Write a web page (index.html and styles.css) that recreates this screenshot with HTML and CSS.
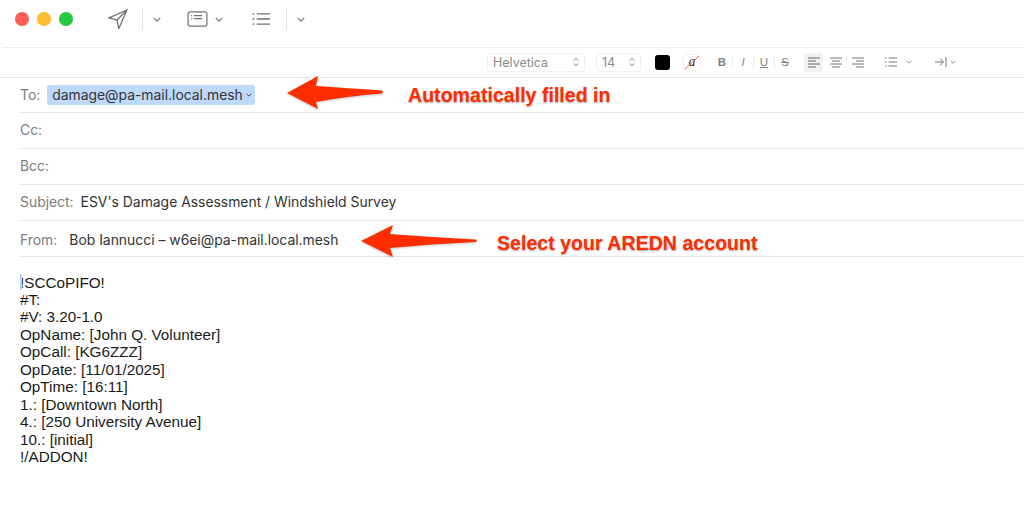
FILE: index.html
```html
<!DOCTYPE html>
<html lang="en">
<head>
<meta charset="utf-8">
<title>Compose message</title>
<link rel="stylesheet" href="styles.css">
</head>
<body>
<div class="window">
  <header class="toolbar">
    <div class="lights"><span class="light red"></span><span class="light yellow"></span><span class="light green"></span></div>
    <svg class="ico send" viewBox="0 0 20 20"><path d="M19 1 1 8.800l8 2.200 1.800 8.500z M19 1 9 11"/></svg>
    <span class="vsep first"></span>
    <svg class="chev c1" viewBox="0 0 10 6"><path d="M1 1l4 4 4-4"/></svg>
    <svg class="ico header-ico" viewBox="0 0 22 17"><rect x="1" y="1" width="20" height="15" rx="2"/><path d="M4 5h1M7 5h9M4 8h1M7 8h9"/></svg>
    <svg class="chev c2" viewBox="0 0 10 6"><path d="M1 1l4 4 4-4"/></svg>
    <svg class="ico list-ico" viewBox="0 0 19 14"><path d="M.5 1.500h2M5 1.500h14M.5 7h2M5 7h14M.5 12.500h2M5 12.500h14"/></svg>
    <span class="vsep second"></span>
    <svg class="chev c3" viewBox="0 0 10 6"><path d="M1 1l4 4 4-4"/></svg>
  </header>
  <div class="formatbar">
    <div class="select font-select"><span>Helvetica</span><svg class="updown" viewBox="0 0 6 10"><path d="M.8 3.500 3 1.200l2.200 2.300M.8 6.500 3 8.800l2.200-2.300"/></svg></div>
    <div class="select size-select"><span>14</span><svg class="updown" viewBox="0 0 6 10"><path d="M.8 3.500 3 1.200l2.200 2.300M.8 6.500 3 8.800l2.200-2.300"/></svg></div>
    <span class="swatch"></span>
    <span class="bgswatch"><i>a</i><svg class="slash" viewBox="0 0 16 15"><path d="M1 14 15 1"/></svg></span>
    <div class="styles">
      <b class="st">B</b><span class="thin"></span><i class="st">I</i><span class="thin"></span><u class="st">U</u><span class="thin"></span><s class="st">S</s>
    </div>
    <div class="aligns">
      <span class="al active"><svg viewBox="0 0 12 11"><path d="M0 1h12M0 4h8M0 7h12M0 10h8"/></svg></span>
      <span class="al"><svg viewBox="0 0 12 11"><path d="M0 1h12M2 4h8M0 7h12M2 10h8"/></svg></span>
      <span class="thin"></span>
      <span class="al"><svg viewBox="0 0 12 11"><path d="M0 1h12M4 4h8M0 7h12M4 10h8"/></svg></span>
    </div>
    <svg class="fmt-list" viewBox="0 0 12 10"><path d="M0 1h1.500M3.500 1H12M0 5h1.500M3.500 5H12M0 9h1.500M3.500 9H12"/></svg>
    <svg class="chev small list-chev" viewBox="0 0 10 6"><path d="M1 1l4 4 4-4"/></svg>
    <svg class="fmt-indent" viewBox="0 0 12 10"><path d="M0 5h8M5 1.500 8.500 5 5 8.500M11 0v10"/></svg>
    <svg class="chev small indent-chev" viewBox="0 0 10 6"><path d="M1 1l4 4 4-4"/></svg>
  </div>
  <section class="fields">
    <div class="row to"><span class="label">To:</span><span class="token">damage@pa-mail.local.mesh<svg class="chev tok" viewBox="0 0 10 6"><path d="M1 1l4 4 4-4"/></svg></span></div>
    <div class="row"><span class="label">Cc:</span></div>
    <div class="row"><span class="label">Bcc:</span></div>
    <div class="row"><span class="label">Subject:</span><span class="value">ESV's Damage Assessment / Windshield Survey</span></div>
    <div class="row from-row"><span class="label">From:</span><span class="value from">Bob Iannucci – w6ei@pa-mail.local.mesh</span></div>
  </section>
  <main class="body"><span class="caret"></span>!SCCoPIFO!<br>#T:<br>#V: 3.20-1.0<br>OpName: [John Q. Volunteer]<br>OpCall: [KG6ZZZ]<br>OpDate: [11/01/2025]<br>OpTime: [16:11]<br>1.: [Downtown North]<br>4.: [250 University Avenue]<br>10.: [initial]<br>!/ADDON!</main>
  <svg class="arrow a1" viewBox="0 0 96 34"><path d="M0 17 31 0 29 10Q60 12 95 14.500q1.500 1.500 0 3Q60 20 29 26L31 33z"/></svg>
  <div class="note n1">Automatically filled in</div>
  <svg class="arrow a2" viewBox="0 0 116 34"><path d="M0 17 32 1 29 10Q70 13 115 15.500q1.500 1.200 0 2.500Q70 20 29 24L32 33z"/></svg>
  <div class="note n2">Select your AREDN account</div>
</div>
</body>
</html>
```
FILE: styles.css
```css
* { box-sizing: border-box; }
html, body { margin: 0; padding: 0; background: #fff; }
.window { position: relative; width: 1024px; height: 529px; overflow: hidden; font-family: Inter, "Liberation Sans", sans-serif; color: #3a3a3a; }
svg { display: block; flex: none; fill: none; stroke: currentColor; }

.toolbar { display: flex; align-items: center; height: 48px; margin-left: 2px; padding: 0 0 9px 13px; border-bottom: 1px solid #ededed; color: #737373; }
.lights { display: flex; gap: 8.500px; }
.light { width: 13.500px; height: 13.500px; border-radius: 50%; }
.red { background: #ff5f57; }
.yellow { background: #febc2e; }
.green { background: #28c840; }
.ico { stroke-width: 1.300; }
.send { width: 20px; height: 20px; margin-left: 35px; }
.vsep { width: 1px; height: 21px; background: #e3e3e3; }
.vsep.first { margin-left: 14px; }
.chev { width: 8px; height: 5px; stroke-width: 1.500; }
.c1 { margin-left: 10px; }
.header-ico { width: 21px; height: 16px; margin-left: 26px; }
.c2 { margin-left: 7px; }
.list-ico { width: 18px; height: 14px; margin-left: 29px; stroke-width: 1.400; }
.second { margin-left: 16px; }
.c3 { margin-left: 10px; }

.formatbar { display: flex; align-items: center; height: 30px; padding: 0 0 1px 487px; border-bottom: 1px solid #e6e6e6; color: #757575; font-size: 12.500px; }
.select { display: flex; align-items: center; justify-content: space-between; height: 19px; border: 1px solid #f0f0f0; border-radius: 4px; padding: 0 5px; color: #8a8a8a; }
.font-select { width: 98px; }
.size-select { width: 45px; margin-left: 11px; }
.updown { width: 6px; height: 10px; stroke-width: 1; color: #777; }
.swatch { width: 15px; height: 15px; margin-left: 14px; background: #000; border-radius: 3px; }
.bgswatch { position: relative; display: flex; justify-content: center; align-items: center; width: 16px; height: 15px; margin-left: 14px; border-radius: 2px; font: italic 14px "Liberation Serif", serif; color: #333; box-shadow: 0 0 2px #ccc; }
.slash { position: absolute; left: 0; top: 0; width: 16px; height: 15px; color: #ff5a4a; stroke-width: 1; }
.styles { display: flex; align-items: center; margin-left: 16.500px; }
.st { width: 11px; text-align: center; font-size: 11.500px; color: #808080; font-family: "Liberation Sans", sans-serif; }
.thin { width: 1px; height: 12px; margin: 0 4.500px; background: #ececec; }
.aligns { display: flex; align-items: center; margin-left: 13.500px; }
.al { display: flex; align-items: center; justify-content: center; width: 19px; height: 19px; border-radius: 4px; }
.al svg { width: 12px; height: 11px; stroke-width: 1; }
.al.active { background: #f1f1f1; color: #666; }
.aligns .thin { margin: 0 1px; }
.al.active + .al { margin-left: 3px; }
.fmt-list { width: 12px; height: 10px; margin-left: 18px; stroke-width: 1; }
.chev.small { width: 6px; height: 4px; stroke-width: 1.300; }
.chev.list-chev { margin-left: 9px; }
.fmt-indent { width: 12px; height: 10px; margin-left: 23px; stroke-width: 1; }
.chev.indent-chev { margin-left: 3px; }

.fields { display: flex; flex-direction: column; padding-left: 20px; }
.row { display: flex; align-items: center; height: 36px; padding-bottom: 2px; border-bottom: 1px solid #e6e6e6; font-size: 13.900px; }
.row.to { height: 35px; padding-bottom: 1px; }
.row.from-row { padding: 2px 0 0; }
.label { color: #7d7d7d; }
.value { margin-left: 7px; color: #333; }
.value.from { margin-left: 12px; }
.token { display: inline-flex; align-items: center; height: 20px; margin-left: 7px; padding: 0 3px 0 5px; background: #bed9fc; border-radius: 3px; color: #333; }
.chev.tok { width: 6px; height: 4px; margin-left: 3px; color: #333; }

.body { position: relative; padding: 16.500px 0 0 20px; font: 15.280px/17.450px "Liberation Sans", Arial, sans-serif; color: #1a1a1a; }
.caret { position: absolute; left: 19.500px; top: 17px; width: 2px; height: 16px; background: #b8d3f8; }

.arrow { position: absolute; fill: #ff2d00; stroke: none; filter: drop-shadow(0 1px 1px rgba(0,0,0,.22)); }
.a1 { left: 287px; top: 76px; width: 96px; height: 34px; }
.a2 { left: 361px; top: 224px; width: 116px; height: 34px; }
.note { position: absolute; font: bold 19.600px/22px "Liberation Sans", Arial, sans-serif; color: #ff2d00; text-shadow: 0 1px 2px rgba(0,0,0,.35); white-space: nowrap; }
.n1 { left: 408px; top: 84px; }
.n2 { left: 497px; top: 232px; }
```
